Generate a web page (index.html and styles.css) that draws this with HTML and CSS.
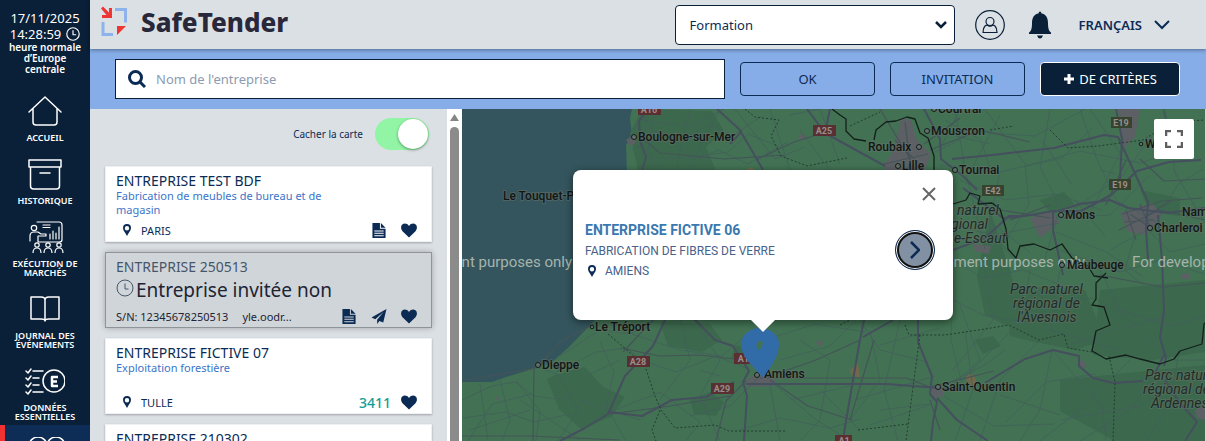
FILE: index.html
```html
<!DOCTYPE html>
<html lang="fr">
<head>
<meta charset="utf-8">
<title>SafeTender</title>
<link rel="stylesheet" href="styles.css">
</head>
<body>
<svg class="defs" aria-hidden="true">
  <symbol id="pin" viewBox="0 0 8 12"><path fill-rule="evenodd" d="M4 0a4 4 0 0 1 4 4c0 2.600-2.500 5-4 8C2.500 9 0 6.600 0 4a4 4 0 0 1 4-4zm0 2a2.200 2.200 0 1 0 0 4.400A2.200 2.200 0 0 0 4 2z"/></symbol>
  <symbol id="heart" viewBox="0 0 16 14"><path d="M8 14 1.500 7.700C-.4 5.600-.3 2.600 1.300 1.100 3.100-.5 6-.2 8 2.400 10-.2 12.900-.5 14.700 1.100c1.600 1.500 1.700 4.500-.2 6.600z"/></symbol>
  <symbol id="doc" viewBox="0 0 14 16"><path fill-rule="evenodd" d="M0 0h8v6h6v10H0zM9 0l5 5H9zM2 8v1h10V8zm0 2.500v1h10v-1zM2 13v1h10v-1z"/></symbol>
  <symbol id="plane" viewBox="0 0 16 16"><path d="M16 0 0 9l4 1.800L13 3 6 11.500V16l2.400-3.300L12.500 14.500z"/></symbol>
  <symbol id="clock" viewBox="0 0 18 18"><circle cx="9" cy="9" r="8"/><path d="M9 4.500V10h3.500"/></symbol>
</svg>
<div class="app">
  <nav class="side">
    <div class="now">
      <span>17/11/2025</span>
      <span class="time">14:28:59 <svg class="line now-clock"><use href="#clock"/></svg></span>
      <small>heure normale d’Europe centrale</small>
    </div>
    <a class="item" href="#"><svg class="line" viewBox="0 0 40 32"><path d="m4 17 16-15 16 15M8 14v13q0 3 3 3h18q3 0 3-3V14"/></svg>ACCUEIL</a>
    <a class="item" href="#"><svg class="line" viewBox="0 0 40 32"><path d="M4 2h32v7H4zM5.500 9v19q0 3 3 3h23q3 0 3-3V9M15 15h10"/></svg>HISTORIQUE</a>
    <a class="item" href="#"><svg class="line thin" viewBox="0 0 40 32"><circle cx="9" cy="7" r="2.700"/><path d="M12 1h22q3 0 3 3v15q0 2-3 2H13M5 20v-5q0-4 4-4h4l3 2h5v2h-8v6M18 4h7M18 6.500h7M25 18v-5M28 18v-8M31 18v-6M34 18V6"/><circle cx="12" cy="24" r="2.200"/><circle cx="23" cy="24" r="2.200"/><circle cx="34" cy="24" r="2.200"/><path d="M8 32q0-5 4-5t4 5M19 32q0-5 4-5t4 5M30 32q0-5 4-5t4 5"/></svg>EXÉCUTION DE MARCHÉS</a>
    <a class="item" href="#"><svg class="line" viewBox="0 0 40 32"><path d="M6 4h10q4 0 4 3 0-3 4-3h10v22H24q-4 0-4 2 0-2-4-2H6zM20 7v21"/></svg>JOURNAL DES ÉVÉNEMENTS</a>
    <a class="item" href="#"><svg class="line" viewBox="0 0 40 32"><path d="m1 6 2 2 3-4M1 13l2 2 3-4M1 20l2 2 3-4M1 27l2 2 3-4M8 6h10M8 13h6M8 20h6M8 27h10"/><circle cx="29" cy="16" r="11"/><path class="bold" d="M33 12h-6v9h6m-6-4.500h5"/></svg>DONNÉES ESSENTIELLES</a>
    <a class="item active" href="#" aria-label="Suite"><svg class="line" viewBox="0 0 40 32"><circle cx="13" cy="9" r="9"/><circle cx="31" cy="9" r="9"/></svg></a>
  </nav>

  <main class="main">
    <header class="top">
      <a class="brand" href="#">
        <svg viewBox="0 0 28 32"><path fill="none" stroke="#8db2ec" stroke-width="3" d="M15 3.500h10.500v13M3 16v12.500h10"/><path fill="#ef3434" d="M1 2.500 3 .5l6 6V2h3v10H2V9h4.500zM17 20h9l-9 9z"/></svg>
        SafeTender
      </a>
      <select class="picker" aria-label="Profil"><option>Formation</option></select>
      <button class="icon-btn" aria-label="Compte"><svg class="user" viewBox="0 0 30 30"><circle cx="15" cy="15" r="14.300"/><circle cx="15" cy="11.500" r="4"/><path d="M10 16q-2 2-2 6.500h14q0-4.500-2-6.500-2-1.500-3-.5-2 1.500-4 0-1-1-3 .5z"/></svg></button>
      <button class="icon-btn" aria-label="Notifications"><svg class="bell" viewBox="0 0 24 28"><path d="M11 1q1-1 2 0l.5 1.500C18 3 20 7 20 12c0 6 1 8 3 9.500V23H1v-1.500C3 20 4 18 4 12c0-5 2-9 6.500-9.500zM9 24.500h6q-1 3-3 3t-3-3z"/></svg></button>
      <button class="lang">FRANÇAIS <svg viewBox="0 0 16 10"><path d="m1 1 7 7 7-7"/></svg></button>
    </header>

    <form class="search">
      <label class="field">
        <svg viewBox="0 0 18 18"><circle cx="7.500" cy="7.500" r="6"/><path d="m12 12 5 5"/></svg>
        <input type="text" placeholder="Nom de l'entreprise" aria-label="Nom de l'entreprise">
      </label>
      <button type="button" class="btn">OK</button>
      <button type="button" class="btn">INVITATION</button>
      <button type="button" class="btn dark"><svg viewBox="0 0 12 12"><path d="M6 1v10M1 6h10"/></svg>DE CRITÈRES</button>
    </form>

    <div class="content">
      <section class="list">
        <div class="cards">
          <label class="toggle">Cacher la carte <input type="checkbox" role="switch" checked></label>
          <article class="card">
            <h2>ENTREPRISE TEST BDF</h2>
            <p class="kind">Fabrication de meubles de bureau et de magasin</p>
            <div class="foot"><svg class="pin"><use href="#pin"/></svg><span class="grow">PARIS</span><svg class="ico"><use href="#doc"/></svg><svg class="ico"><use href="#heart"/></svg></div>
          </article>
          <article class="card invited">
            <h2>ENTREPRISE 250513</h2>
            <p class="notice"><svg><use href="#clock"/></svg>Entreprise invitée non</p>
            <div class="foot"><span>S/N: 12345678250513</span><span class="grow">yle.oodr...</span><svg class="ico"><use href="#doc"/></svg><svg class="ico"><use href="#plane"/></svg><svg class="ico"><use href="#heart"/></svg></div>
          </article>
          <article class="card">
            <h2>ENTREPRISE FICTIVE 07</h2>
            <p class="kind">Exploitation forestière</p>
            <div class="foot"><svg class="pin"><use href="#pin"/></svg><span class="grow">TULLE</span><b class="code">3411</b><svg class="ico"><use href="#heart"/></svg></div>
          </article>
          <article class="card">
            <h2>ENTREPRISE 210302</h2>
          </article>
        </div>
        <div class="scroll"><svg viewBox="0 0 9 7"><path d="M4.500 0 9 7H0z"/></svg><div class="thumb"></div></div>
      </section>

      <section class="map">
        <svg class="canvas" viewBox="462 109 743 332" preserveAspectRatio="xMinYMin slice">
          <path fill="#427253" d="M462 109h743v332H462z"/>
          <path fill="#34555d" d="M462 109h170l-2 9 2 18-6 9 1 30 3 45-10 55-25 45-26 27-17 15-20 7-26 8-14 5H462z"/>
          <g fill="#3c684d">
            <path d="m642 109 70 2 12 20-18 16 10 24h-78l-8-38zM660 322l50 2 12 16-20 12-34-6zM555 375l30-8 18 20 22 10-14 20-30 12-22-20-12-30zM690 400l20-8 14 10-8 14-22-2zM990 210l20 60 15 58-20-3-20-10-8-38zM1005 285l80 5 20 50-30 10-40-8-25-6zM1100 290l105-10v72l-52 8-60-5zM1060 380l145-15v76h-90l-55-30zM1040 200l24-8 10 12-24 8zM1140 190l40 8v18l-30-4zM735 345l24 6-6 12-22-5zM975 340l18-4 8 10-18 8z"/>
          </g>
          <g fill="#5c6064">
            <path d="m626 140 6-4 4 7-6 3zM884 164l10-14 7-32 10 2 6 20 14 14-6 16-40 2zM1118 109h22l-5 28-12 12zM1030 218l22-8 8 12-20 16zM1120 213l32-10 10 12-16 20-18-3zM746 380l14-8 16 8-2 6-26 1zM930 388l12-4 2 12-10 2zM1195 410l10-4v14l-8-2zM1078 362l6-2 2 8-6 1zM1182 274l7-1v6h-7zM973 244l18 2-2 8-14-3zM800 134l6 2-2 4-6-2zM818 340l5 2-3 5-4-4zM495 396l5 2-4 2z"/>
          </g>
          <g fill="#70674c"><path d="m858 362 2 16q-12-2-9-9zM966 376q7-5 10 4v6l-9-2zM746 170l6-3 2 4z"/></g>
          <!-- local roads -->
          <g fill="none" stroke="#42605a" stroke-width=".8" stroke-linejoin="round">
            <path d="m640 109 12 22 30 8 28-15 22 12 30-20M632 136l20 22 36 0 40-6 20-18 30 12M655 109l-8 48 20 13M690 109l-14 61M720 109l-32 61M770 109l20 61M632 150l34-16 30 26 22-10 30 14 40-22M800 130l30 40M640 120l50 6 34-17M735 109l40 50 30-12M790 115l30-6 20 55"/>
            <path d="m462 400 30-14 24-4 18 14 30 4 26-26 30-14M480 384l8 57M500 380l10 40-8 21M516 381l24 30-4 30M462 418l44-6 28 10 36-8M468 441l24-37 40-10M534 365l24 10 20 35-20 31M556 372l40-20 30-4 24 18M560 356l40-26 30 4 26-14M600 342l14 30-8 34 20 35M620 330l60 20 42 6 30-26M640 360l36 12 40-16 30 12M610 412l50-20 40 30-14 19M700 330l20 30-20 36 20 45M680 320l10 40-30 40M770 385l10 56M760 376l-30 30-40 10M765 340l50-16 50 8M780 360l50-14 30-30M775 385l40 34 35 22M800 340l30 20-10 60-20 21M790 400l60-14M740 430l40-12 50 10 30-9"/>
            <path d="m955 109 10 60 20 80M935 152l40-20 60 4 50-27M940 165l60 7 26-6 36-8 30-30M985 109l40 55 4 40-24 38M1050 109l-10 58 20 40M1080 109l16 48 20 43 40 22M1026 166l54-15 60 12 30-9M960 180l46 20 50-6 46 16M1000 172l-10 50 40 30M1058 214l-14 48M1060 218l50-3 40-40M1066 214l56-38 30-40M1056 232l50 20 36 24M1090 109l30 44-30 60M953 225l40 10 66-12M1110 250l44-24 24-42 25-15M1150 232l20 20 35-8M1165 109l10 64 30 50M1060 250l60 22 40-12 45 14M953 260l30 18 40-8 40 16M960 109l-20 40"/>
            <path d="m953 300 30 15 46 8 22-20 44-5 30 20M960 305l20 55-36 32M985 270l8 50-40 50M1030 270l-8 50-70 70M1040 340l-40 40-20 61M1052 350l-12 60-20 31M1052 350l50 56 4 35M1130 360l-50 50-40 31M1096 374l-50 8-40 40M944 396l50 30 60-2M860 320l20 30 48 12M870 330l10 50-30 40M880 345l60-17M900 320l-16 70 14 51M855 400l80-24M945 385l40-20 20-15M965 330l8 60-18 51M1100 270l20 40 50 16 35-10M1116 330l52-14M1150 380l-20 30-50 31M1180 345l-10 60-24 36M1110 300l60 60 35 0M953 280l-2 60 10 40M1060 420l80-14 30-20M1060 270l-10 60 70 20"/>
            <path d="m930 130 60 14M945 120l36 20 10 32M1000 115l-30 57M1042 140l30 45M1100 170l16 4M1075 200l30 36M990 228l30 40M1135 235l-10 35 30 25M820 390l40 40M700 370l20 6M580 400l60 20M520 400l60 40M470 430l60-20M880 410l50-6M870 425l60-20M1000 395l60 20M1070 345l40-15"/>
          </g>
          <!-- secondary roads -->
          <g fill="none" stroke="#455459" stroke-width="1.200" stroke-linejoin="round">
            <path d="m640 136 20 17 64 6 60-4M756 160l38-18 32-10M462 381l40-7 34-6 24-26 34-18M534 367l-1 74M621 348l38 8 40-1 36 4M760 378l146 0 24 9M776 374l40-14 44-20 4-20M770 380l38 26 44 14M610 414l60-8 60-10M653 320l-30 32M716 441l10-40 20-20M1099 275l64 12 42-4M930 387l64-16M940 430l-10-30M462 436l68 0 90 4"/>
            <path d="m930 150 50-20 50 12M1106 205l20-45M1140 159l24 22 41-2M1122 214l40-13 40-3M1148 215l24-15M850 420l24-80M1000 210l50 8M1010 220l40-15M880 109l30 50-8 50M960 118l-36 26M1163 109l12 45"/>
            <path d="m1119 230 40-20 46 10M1126 210l10 30M1140 204l12 28M1124 222l30-2M1130 214l24 16M895 140l26 26M905 122l6 48M884 164l44-10"/>
          </g>
          <!-- motorways -->
          <g fill="none" stroke="#454f5e" stroke-width="2" stroke-linejoin="round">
            <path d="m648 109-9 12 1 20 6 16-4 13M717 109l22 20 12 20 12 21M742 131l-12 13M807 109l18 24 60 33M830 109l-5 24M924 109l16 30 1 20 22 17 14 14"/>
            <path d="m952 159 40-4 62-7 50-13 14 2 14 30 16 35-2 27 2 30M963 188l40 30 22-2 28-5 28 0 30-16 26-24 32-9 32-2M1054 212l26-8 30-4 18 8 40 5 37-5M1053 211v19l10 45M1158 215l4 45 2 50-4 28 6 20-2 8M1165 353l-10 20M1025 216l-16 0-24 22-32 12"/>
            <path d="m665 320-12 26-28 30-17 38-23 14-25 13M608 412l34 4 30-16 34-3 28-15M695 320l20 20 18 6 16 25-6 11 4 14-3 45M746 384l30 0 110 0 80 6M864 320l-5 25-14 82-2 14M863 337l30-17M918 320v22l14 34-2 18 7 8-4 20-2 19M937 398l20 22 31 21"/>
            <path d="m985 383 40-24 28-9 26 6v10l14 12 20 5 30-2M1116 109l6 30-2 40M1165 380l14 22 18 20-12 19"/>
          </g>
          <!-- regional and national boundaries -->
          <g fill="none" stroke="#233c30" stroke-width="1" stroke-dasharray="2 2">
            <path d="m745 109 10 8 24 3-8 16 10 20 26 10 40-8M608 334l12 10 25 22 10 30 6 14 14 18 40-3 14 6 56 0M660 410l-8 20 4 11M840 325l16-8M905 325l4 10 36 0 40-6 24-4 30 15 25-6 4 14 30 5M1109 356l6 26-2 60M920 335l-8 60-6 46M850 126l30-14M990 130l24-4M1050 130l18 18 30-2 45-6 30-18 32-2M858 430l50-6"/>
          </g>
          <g fill="none" stroke="#141f1b" stroke-width="1.300" stroke-linejoin="round">
            <path d="m832 109 8 6 6 4 0 12 8 8 12 2M874 140l2-10 10-8 10-1 11-4 8 2 5 14 8 5 6 18 0 14M953 204l13-4 4-7 10 3-2 8 14-1 8 6 6 20 2 20 8 9 4-12 14-2 16 6 12-6 10 14 16 8 6 10 14 2M1106 273l-10 10 0 16-4 6 12 2 6 18-14 6-4 20 14 8 20-4 14 4 20 5 14-5 6-8 22-7 2-20 9-9"/>
          </g>
          <!-- road shields -->
          <g font-family="Roboto, sans-serif" font-size="9" font-weight="700" text-anchor="middle">
            <g fill="#592f32"><path d="M638 103h23v12h-23zM813 125h23v11h-23zM627 356h23v11h-23zM734 353h23v11h-23zM711 383h23v11h-23zM835 435h17v11h-17z"/></g>
            <g fill="#35432f"><path d="M1111 117h21v11h-21zM1109 179h22v11h-22zM982 185h22v11h-22z"/></g>
            <g fill="#9b8d8b"><text x="649" y="113">A16</text><text x="824" y="134">A25</text><text x="638" y="365">A28</text><text x="746" y="362">A16</text><text x="722" y="392">A29</text><text x="844" y="444">A1</text><text x="1121" y="126">E19</text><text x="1120" y="188">E19</text><text x="993" y="194">E42</text></g>
          </g>
          <g class="watermark"><text x="572" y="267" text-anchor="end">For development purposes only</text><text x="1085" y="267" text-anchor="end">For development purposes only</text><text x="1132" y="267">For development purposes only</text></g>
          <g class="places">
            <text x="638" y="141">Boulogne-sur-Mer</text><text x="503" y="200">Le Touquet-Paris-Plage</text><text x="595" y="331">Le Tréport</text><text x="542" y="369">Dieppe</text><text x="764" y="378">Amiens</text>
            <text x="938" y="113">Courtrai</text><text x="931" y="135">Mouscron</text><text x="868" y="151">Roubaix</text><text x="902" y="170">Lille</text><text x="959" y="174">Tournai</text><text x="1065" y="219">Mons</text><text x="1145" y="148">Wavre</text><text x="1182" y="216">Namur</text><text x="1154" y="232">Charleroi</text><text x="1067" y="269">Maubeuge</text><text x="942" y="391">Saint-Quentin</text>
          </g>
          <g class="dots"><circle cx="634" cy="137" r="2.500"/><circle cx="592" cy="327" r="1.800"/><circle cx="538" cy="365" r="2.500"/><circle cx="757" cy="375" r="2.500"/><circle cx="934" cy="109" r="2.500"/><circle cx="927" cy="131" r="2.500"/><circle cx="919" cy="147" r="2.500"/><circle cx="898" cy="166" r="2.500"/><circle cx="955" cy="170" r="2.500"/><circle cx="1061" cy="215" r="2.500"/><circle cx="1141" cy="144" r="1.800"/><circle cx="1150" cy="228" r="2.500"/><circle cx="1062" cy="265" r="2.500"/><circle cx="938" cy="387" r="2.500"/></g>
          <g class="places park"><text x="957" y="215">naturel</text><text x="951" y="229">gional</text><text x="954" y="243">e-Escaut</text><text x="1010" y="294">Parc naturel</text><text x="1013" y="308">régional de</text><text x="1017" y="322">l'Avesnois</text><text x="1145" y="380">Parc naturel</text><text x="1143" y="394">régional des</text><text x="1151" y="408">Ardennes</text></g>
          <path fill="#326ca8" fill-rule="evenodd" d="M763 378c-5-7-22-20-22-34 0-9 9-16 19-16s19 7 19 16c0 14-11 26-16 34zm-4-37c-3 2-3 7-1 9 4-2 6-6 4-9z"/>
        </svg>
        <button class="full" aria-label="Plein écran"><svg viewBox="0 0 18 18"><path d="M1 6V1h5M12 1h5v5M17 12v5h-5M6 17H1v-5"/></svg></button>
        <div class="popup">
          <div class="info">
            <h3>ENTERPRISE FICTIVE 06</h3>
            <p>FABRICATION DE FIBRES DE VERRE</p>
            <p class="place"><svg class="pin"><use href="#pin"/></svg>AMIENS</p>
          </div>
          <button class="go" aria-label="Ouvrir"><svg viewBox="0 0 10 18"><path d="m1 1 8 8-8 8"/></svg></button>
          <button class="close" aria-label="Fermer"><svg viewBox="0 0 14 14"><path d="m1 1 12 12M13 1 1 13"/></svg></button>
        </div>
      </section>
    </div>
  </main>
</div>
</body>
</html>
```

FILE: styles.css
```css
* { box-sizing: border-box; }
body { margin: 0; font-family: "Noto Sans", sans-serif; color: #0b2b55; }
h2, h3, p { margin: 0; font-weight: 400; }
button, input, select { font: inherit; color: inherit; }
button { cursor: pointer; padding: 0; border: 0; background: none; }
a { color: inherit; text-decoration: none; }
svg { display: block; flex: none; }
.defs { width: 0; height: 0; position: absolute; }
.app { display: grid; grid-template-columns: 90px 1fr; height: 100vh; overflow: hidden; }
.line { fill: none; stroke: #fff; stroke-width: 1.5; stroke-linecap: round; stroke-linejoin: round; }
.thin { stroke-width: 1.2; }
.line .bold { stroke-width: 2.5; stroke-linecap: butt; }

/* Sidebar */
.side { background: #0a1f38; color: #fff; overflow: hidden; }
.now { display: flex; flex-direction: column; align-items: center; height: 83px; padding-top: 10px; font-size: 13px; line-height: 16px; }
.time { display: flex; gap: 5px; align-items: center; }
.now-clock { width: 14px; height: 14px; }
.now small { width: 76px; font-size: 10px; line-height: 11px; font-weight: 600; text-align: center; }
.item { display: flex; flex-direction: column; align-items: center; padding: 12px 12px 4px; font-size: 9px; line-height: 9px; font-weight: 600; text-align: center; }
.item svg { width: 40px; height: 32px; margin-bottom: 6px; }
.active { background: #0d2c56; border-left: 5px solid #f03232; padding-right: 17px; }

/* Header */
.main { display: flex; flex-direction: column; min-width: 0; min-height: 0; }
.top { display: flex; align-items: center; height: 49px; padding: 0 36px 0 10px; background: #dbe0e4; box-shadow: 0 1px 4px #0006; z-index: 1; }
.brand { display: flex; align-items: center; gap: 13px; margin-right: auto; padding-bottom: 5px; color: #28283a; font-size: 26px; line-height: 40px; font-weight: 800; }
.brand svg { width: 28px; height: 32px; }
.picker { width: 280px; height: 40px; padding: 0 14px; border: 1px solid #0a1f38; border-radius: 4px; font-size: 13px; appearance: none; background: #fff url("data:image/svg+xml,%3Csvg xmlns='http://www.w3.org/2000/svg' width='12' height='8'%3E%3Cpath d='m1 1 5 5 5-5' fill='none' stroke='%230a1f38' stroke-width='2.5'/%3E%3C/svg%3E") no-repeat right 7px center; }
.icon-btn { margin-left: 20px; }
.user { width: 30px; height: 30px; fill: none; stroke: #0a1f38; stroke-width: 1.2; }
.bell { width: 24px; height: 28px; margin-left: 3px; fill: #0a1f38; }
.lang { display: flex; align-items: center; gap: 12px; margin-left: 27px; font-size: 13px; font-weight: 600; }
.lang svg { width: 16px; height: 10px; fill: none; stroke: #0b2b55; stroke-width: 2; }

/* Search */
.search { display: flex; align-items: center; gap: 15px; height: 60px; padding: 0 26px 0 25px; background: #86ade8; }
.field { flex: 1; display: flex; align-items: center; gap: 10px; height: 40px; padding-left: 12px; border: 1px solid #0a1f38; background: #fff; }
.field svg { width: 18px; height: 18px; fill: none; stroke: #0b2b55; stroke-width: 3; }
.field input { flex: 1; min-width: 0; border: 0; padding: 0; outline: 0; font-size: 13px; }
.field input::placeholder { color: #8c9bb0; }
.btn { display: flex; align-items: center; justify-content: center; gap: 4px; width: 135px; height: 34px; border: 1px solid #0b2b55; border-radius: 4px; font-size: 13px; }
.dark { width: 140px; border-color: #fff; background: #0a1f38; color: #fff; }
.dark svg { width: 12px; height: 12px; stroke: #fff; stroke-width: 3; }

/* Company list */
.content { flex: 1; display: flex; min-height: 0; }
.list { display: flex; width: 372px; background: #dbe0e4; }
.cards { flex: 1; display: flex; flex-direction: column; gap: 10px; padding: 9px 15px 0; min-width: 0; }
.toggle { display: flex; flex: none; align-items: center; justify-content: flex-end; gap: 12px; height: 32px; margin-bottom: 6px; padding-right: 3px; font-size: 10px; }
.toggle input { appearance: none; display: flex; justify-content: flex-end; width: 54px; height: 32px; margin: 0; padding: 1px; border-radius: 16px; background: #91f5a5; }
.toggle input::before { content: ""; width: 30px; height: 30px; border-radius: 50%; background: #fff; box-shadow: 0 1px 3px #0006; }
.card { display: flex; flex-direction: column; flex: none; min-height: 76px; padding: 6px 14px 3px 10px; border: 1px solid #eef1f3; background: #fff; box-shadow: 0 1px 2px #0004; }
.card h2 { font-size: 14px; line-height: 16px; }
.kind { width: 224px; font-size: 11px; line-height: 14px; color: #3b74c8; }
.foot { display: flex; align-items: center; gap: 14px; height: 16px; margin-top: auto; font-size: 11px; }
.pin { width: 8px; height: 12px; fill: #0b2b55; }
.foot .pin { margin: 0 -4px 0 7px; }
.grow { flex: 1; }
.ico { width: 16px; height: 15px; fill: #0b2b55; }
.code { color: #129e98; font-size: 14px; font-weight: 500; margin-right: -4px; }
.invited { border-color: #8f9498; background: #d0d5d9; color: #1d2434; box-shadow: 0 0 6px #0004; }
.invited h2 { color: #46566a; }
.notice { display: flex; gap: 2px; font-size: 19px; line-height: 30px; }
.notice svg { width: 18px; height: 18px; margin-top: 4px; fill: none; stroke: #46566a; }
.scroll { display: flex; flex-direction: column; align-items: center; gap: 6px; width: 15px; padding: 5px 0 0; background: #fff; }
.scroll svg { width: 9px; height: 7px; fill: #858585; }
.thumb { flex: 1; width: 9px; border-radius: 5px 5px 0 0; background: #8b8b8b; }

/* Map */
.map { position: relative; flex: 1; min-width: 0; overflow: hidden; border-right: 1px solid #ced9ee; }
.canvas { position: absolute; inset: 0; width: 100%; height: 100%; }
.places { font-family: Roboto, sans-serif; font-size: 12px; font-weight: 500; fill: #121615; stroke: #68736c; stroke-width: 2px; stroke-opacity: .5; paint-order: stroke; }
.park { font-size: 14px; font-weight: 400; font-style: italic; fill: #1f2c27; }
.dots { fill: #63706b; stroke: #151b19; stroke-width: 1; }
.watermark { font-family: Roboto, sans-serif; font-size: 15px; fill: #a6b4ad; }
.full { position: absolute; top: 10px; right: 11px; display: grid; place-items: center; width: 40px; height: 40px; border-radius: 2px; background: #fff; }
.full svg { width: 18px; height: 18px; fill: none; stroke: #5e5e5e; stroke-width: 2.5; }
.popup { position: absolute; left: 111px; top: 61px; display: flex; align-items: center; justify-content: space-between; width: 380px; min-height: 150px; padding: 10px 18px 0 12px; border-radius: 8px; background: #fff; box-shadow: 0 2px 7px 1px #0006; font-family: Roboto, sans-serif; }
.popup::after { content: ""; position: absolute; left: 178px; top: 100%; border: 12px solid transparent; border-top-color: #fff; border-bottom: 0; }
.info { font-size: 12px; line-height: 20px; color: #48628a; }
.info h3 { font-size: 14px; line-height: 22px; font-weight: 700; color: #3a78b0; }
.place { display: flex; align-items: center; gap: 9px; padding-left: 3px; }
.go { display: grid; place-items: center; width: 40px; height: 40px; border: 1px solid #0b2b55; border-radius: 50%; background: #8190a3; box-shadow: inset 0 0 0 1px #fff, inset 0 0 0 3px #111; }
.go svg { width: 10px; height: 18px; fill: none; stroke: #0b2b55; stroke-width: 2.5; }
.close { position: absolute; top: 17px; right: 17px; }
.close svg { width: 14px; height: 14px; stroke: #666; stroke-width: 2; }
```
